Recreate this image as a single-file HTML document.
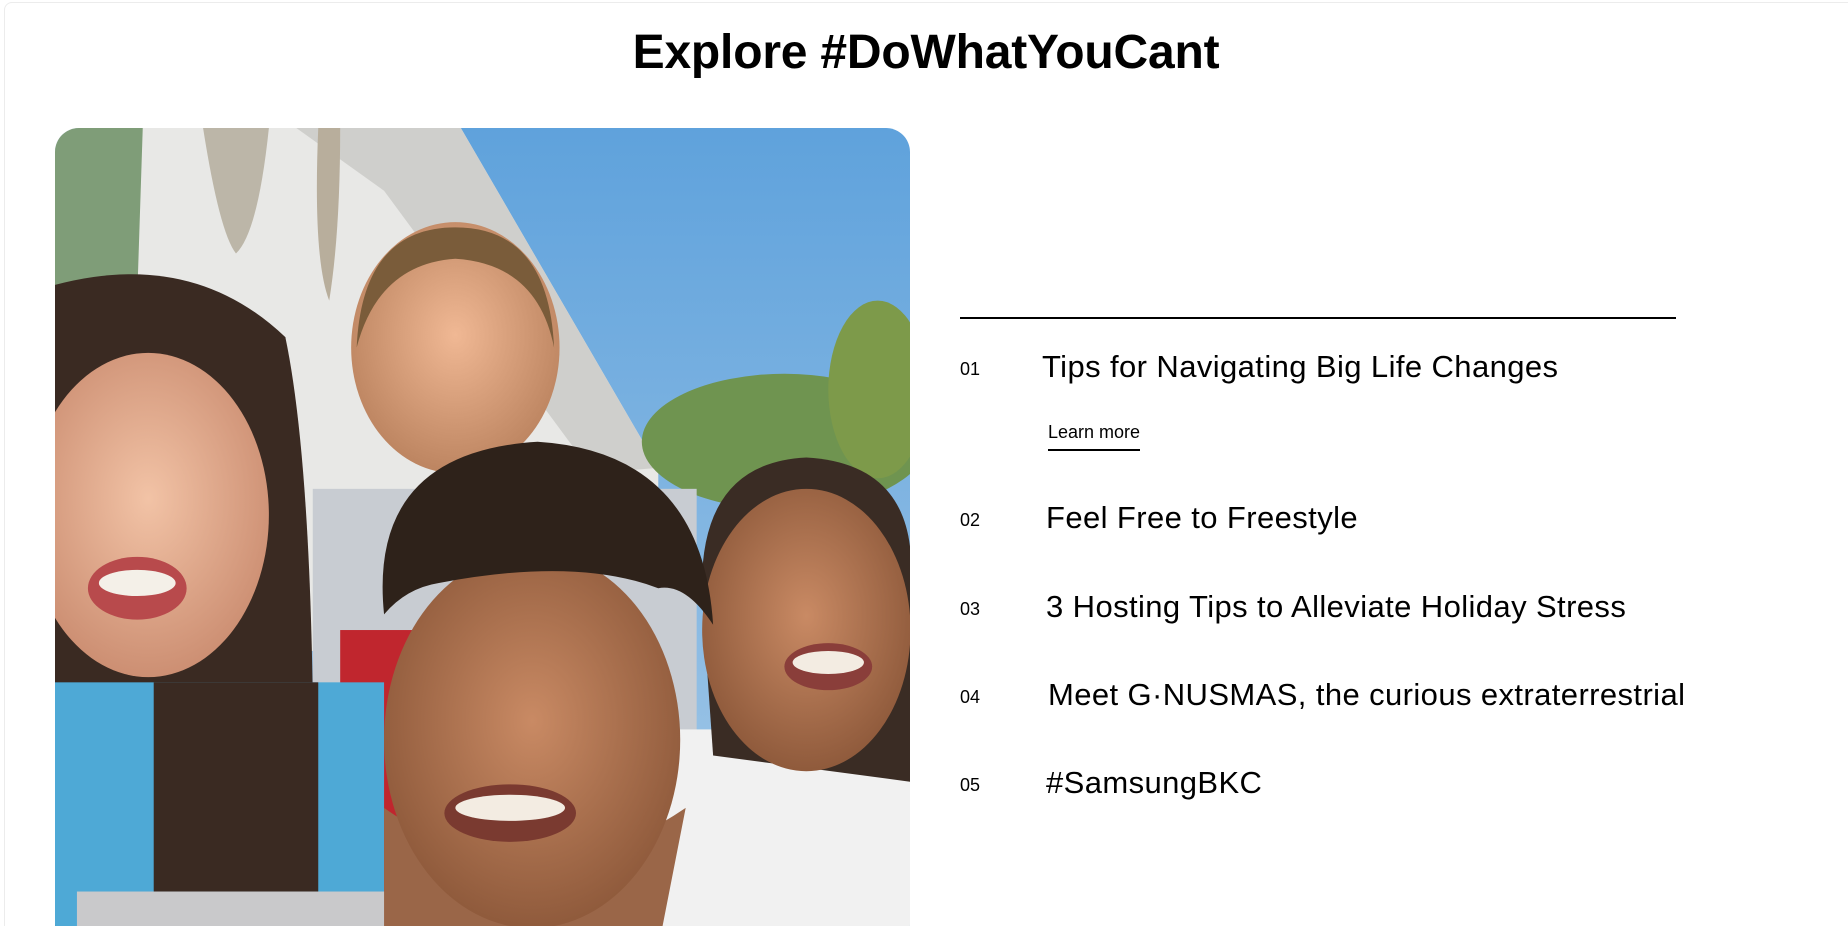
<!DOCTYPE html>
<html><head><meta charset="utf-8"><style>
html,body{margin:0;padding:0;background:#fff;width:1848px;height:926px;overflow:hidden}
body{font-family:"Liberation Sans",Arial,sans-serif;color:#000;position:relative}
.frame{position:absolute;left:4px;top:2px;right:-10px;bottom:-10px;border:1px solid #ececec;border-radius:8px}
h1{position:absolute;left:0;width:1852px;top:25px;margin:0;text-align:center;font-size:48px;font-weight:bold;letter-spacing:-0.2px}
.photo{position:absolute;left:55px;top:128px;width:855px;height:820px;border-radius:24px;overflow:hidden}
.rule{position:absolute;left:960px;top:317px;width:716px;height:2px;background:#000}
.n{position:absolute;left:960px;font-size:18px}
.t{position:absolute;font-size:31px;letter-spacing:0.4px}
.lm{position:absolute;left:1048px;top:422px;font-size:18px;padding-bottom:6px;border-bottom:2px solid #000}
</style></head><body>
<div class="frame"></div>
<h1>Explore #DoWhatYouCant</h1>
<div class="photo">
<svg width="855" height="820" viewBox="0 0 1559 1568" preserveAspectRatio="none">
<defs>
<linearGradient id="sky" x1="0" y1="0" x2="0" y2="1"><stop offset="0" stop-color="#5fa2dc"/><stop offset="1" stop-color="#a8cbe8"/></linearGradient>
<radialGradient id="skin1" cx=".5" cy=".45" r=".6"><stop offset="0" stop-color="#f2c3a6"/><stop offset="1" stop-color="#c98a6e"/></radialGradient>
<radialGradient id="skin2" cx=".5" cy=".45" r=".6"><stop offset="0" stop-color="#c98a64"/><stop offset="1" stop-color="#8a5638"/></radialGradient>
<radialGradient id="skin3" cx=".5" cy=".45" r=".6"><stop offset="0" stop-color="#f0b894"/><stop offset="1" stop-color="#b8805c"/></radialGradient>
</defs>
<rect width="1559" height="1568" fill="url(#sky)"/>
<polygon points="0,0 740,0 1100,650 1100,1000 0,1000" fill="#e8e8e6"/>
<polygon points="440,0 740,0 1100,650 980,660 600,120" fill="#cfcfcc"/>
<polygon points="0,0 160,0 150,320 0,330" fill="#7f9d78"/>
<path d="M270 0 Q300 200 330 240 Q370 200 390 0Z" fill="#bcb6a8"/>
<path d="M480 0 Q470 250 500 330 Q520 200 520 0Z" fill="#b8ae9c"/>
<ellipse cx="1330" cy="600" rx="260" ry="130" fill="#6f9450"/>
<ellipse cx="1500" cy="500" rx="90" ry="170" fill="#7d9a4a"/>
<rect x="470" y="690" width="700" height="900" fill="#c8ccd2"/>
<rect x="520" y="960" width="200" height="500" fill="#c0262e"/>
<ellipse cx="730" cy="420" rx="190" ry="240" fill="url(#skin3)"/>
<path d="M550 420 Q560 190 730 190 Q900 190 910 420 Q880 260 730 250 Q590 260 550 420Z" fill="#7a5c3a"/>
<path d="M0 300 Q250 230 420 400 Q480 700 470 1500 L0 1568Z" fill="#3a2a22"/>
<ellipse cx="170" cy="740" rx="220" ry="310" fill="url(#skin1)"/>
<rect x="0" y="1060" width="600" height="508" fill="#4ea9d6"/>
<rect x="180" y="1060" width="300" height="400" fill="#3a2a22"/>
<ellipse cx="150" cy="880" rx="90" ry="60" fill="#b84a4c"/>
<ellipse cx="150" cy="870" rx="70" ry="25" fill="#f4f0e8"/>
<rect x="1000" y="1150" width="559" height="420" fill="#f1f1f1"/>
<path d="M1180 900 Q1170 640 1370 630 Q1540 640 1559 800 L1559 1250 L1200 1200Z" fill="#3a2c24"/>
<ellipse cx="1370" cy="960" rx="190" ry="270" fill="url(#skin2)"/>
<ellipse cx="1410" cy="1030" rx="80" ry="45" fill="#8a3e3a"/>
<ellipse cx="1410" cy="1022" rx="65" ry="22" fill="#f3ece2"/>
<rect x="40" y="1460" width="560" height="110" fill="#c9c9cb"/>
<path d="M600 1568 L600 1300 Q870 1500 1150 1300 L1100 1568Z" fill="#9a6648"/>
<ellipse cx="870" cy="1170" rx="270" ry="360" fill="url(#skin2)"/>
<path d="M600 930 Q570 620 880 600 Q1180 620 1200 950 Q1150 870 1100 880 Q950 820 700 870 Q640 880 600 930Z" fill="#2e221a"/>
<ellipse cx="830" cy="1310" rx="120" ry="55" fill="#7a3a30"/>
<ellipse cx="830" cy="1300" rx="100" ry="25" fill="#f3ece2"/>
</svg>
</div>
<div class="rule"></div>
<div class="n" style="top:359px">01</div><div class="t" style="left:1042px;top:349px">Tips for Navigating Big Life Changes</div>
<div class="lm">Learn more</div>
<div class="n" style="top:510px">02</div><div class="t" style="left:1046px;top:500px">Feel Free to Freestyle</div>
<div class="n" style="top:599px">03</div><div class="t" style="left:1046px;top:589px">3 Hosting Tips to Alleviate Holiday Stress</div>
<div class="n" style="top:687px">04</div><div class="t" style="left:1048px;top:677px">Meet G·NUSMAS, the curious extraterrestrial</div>
<div class="n" style="top:775px">05</div><div class="t" style="left:1046px;top:765px">#SamsungBKC</div>
</body></html>
